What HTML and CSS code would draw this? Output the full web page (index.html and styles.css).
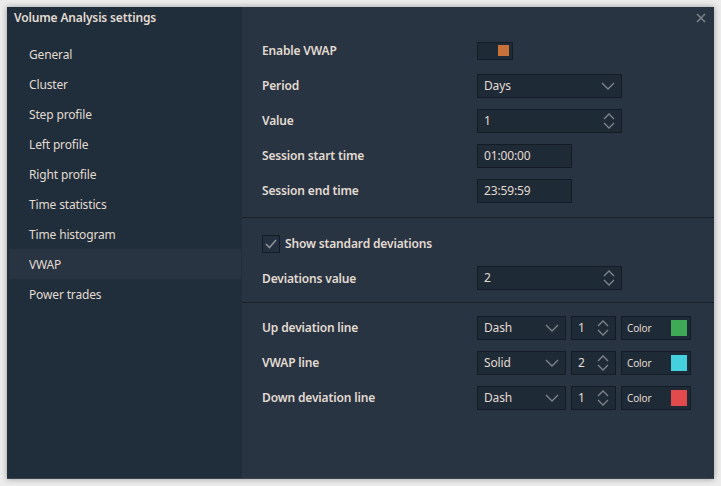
FILE: index.html
```html
<!DOCTYPE html>
<html>
<head>
<meta charset="utf-8">
<link rel="stylesheet" href="styles.css">
</head>
<body>
<div class="dialog">
  <aside class="sidebar">
    <div class="title">Volume Analysis settings</div>
    <div class="nav-item">General</div>
    <div class="nav-item">Cluster</div>
    <div class="nav-item">Step profile</div>
    <div class="nav-item">Left profile</div>
    <div class="nav-item">Right profile</div>
    <div class="nav-item">Time statistics</div>
    <div class="nav-item">Time histogram</div>
    <div class="nav-item active">VWAP</div>
    <div class="nav-item">Power trades</div>
  </aside>
  <main class="content">
    <div class="close">
      <svg width="10" height="10" viewBox="0 0 10 10"><path d="M1 1L9 9M9 1L1 9" stroke="#7d848c" stroke-width="1.5"/></svg>
    </div>
    <section class="section first">
      <div class="row">
        <div class="label">Enable VWAP</div>
        <div class="toggle"><span class="knob"></span></div>
      </div>
      <div class="row">
        <div class="label">Period</div>
        <div class="field select wide"><span>Days</span>
          <svg class="chev" width="14" height="8" viewBox="0 0 14 8"><path d="M1 1L7 7L13 1" fill="none" stroke="#7d848c" stroke-width="1.3"/></svg>
        </div>
      </div>
      <div class="row">
        <div class="label">Value</div>
        <div class="field spin wide"><span>1</span>
          <svg class="arrows" width="12" height="18" viewBox="0 0 12 18"><path d="M1 7L6 2L11 7M1 11L6 16L11 11" fill="none" stroke="#7d848c" stroke-width="1.3"/></svg>
        </div>
      </div>
      <div class="row">
        <div class="label">Session start time</div>
        <div class="field time"><span>01:00:00</span></div>
      </div>
      <div class="row">
        <div class="label">Session end time</div>
        <div class="field time"><span>23:59:59</span></div>
      </div>
    </section>
    <section class="section mid">
      <div class="row">
        <div class="check">
          <svg width="12" height="10" viewBox="0 0 12 10"><path d="M1 5L4.5 8.5L11 1" fill="none" stroke="#8a9097" stroke-width="1.6"/></svg>
        </div>
        <div class="check-label">Show standard deviations</div>
      </div>
      <div class="row">
        <div class="label">Deviations value</div>
        <div class="field spin wide"><span>2</span>
          <svg class="arrows" width="12" height="18" viewBox="0 0 12 18"><path d="M1 7L6 2L11 7M1 11L6 16L11 11" fill="none" stroke="#7d848c" stroke-width="1.3"/></svg>
        </div>
      </div>
    </section>
    <section class="section last">
      <div class="row">
        <div class="label">Up deviation line</div>
        <div class="controls">
          <div class="field select style"><span>Dash</span>
            <svg class="chev" width="14" height="8" viewBox="0 0 14 8"><path d="M1 1L7 7L13 1" fill="none" stroke="#7d848c" stroke-width="1.3"/></svg>
          </div>
          <div class="field spin small"><span>1</span>
            <svg class="arrows" width="12" height="18" viewBox="0 0 12 18"><path d="M1 7L6 2L11 7M1 11L6 16L11 11" fill="none" stroke="#7d848c" stroke-width="1.3"/></svg>
          </div>
          <div class="field color"><span class="color-text">Color</span><span class="swatch green"></span></div>
        </div>
      </div>
      <div class="row">
        <div class="label">VWAP line</div>
        <div class="controls">
          <div class="field select style"><span>Solid</span>
            <svg class="chev" width="14" height="8" viewBox="0 0 14 8"><path d="M1 1L7 7L13 1" fill="none" stroke="#7d848c" stroke-width="1.3"/></svg>
          </div>
          <div class="field spin small"><span>2</span>
            <svg class="arrows" width="12" height="18" viewBox="0 0 12 18"><path d="M1 7L6 2L11 7M1 11L6 16L11 11" fill="none" stroke="#7d848c" stroke-width="1.3"/></svg>
          </div>
          <div class="field color"><span class="color-text">Color</span><span class="swatch cyan"></span></div>
        </div>
      </div>
      <div class="row">
        <div class="label">Down deviation line</div>
        <div class="controls">
          <div class="field select style"><span>Dash</span>
            <svg class="chev" width="14" height="8" viewBox="0 0 14 8"><path d="M1 1L7 7L13 1" fill="none" stroke="#7d848c" stroke-width="1.3"/></svg>
          </div>
          <div class="field spin small"><span>1</span>
            <svg class="arrows" width="12" height="18" viewBox="0 0 12 18"><path d="M1 7L6 2L11 7M1 11L6 16L11 11" fill="none" stroke="#7d848c" stroke-width="1.3"/></svg>
          </div>
          <div class="field color"><span class="color-text">Color</span><span class="swatch red"></span></div>
        </div>
      </div>
    </section>
  </main>
</div>
</body>
</html>
```
FILE: styles.css
```css
* { box-sizing: border-box; }
html, body { margin: 0; padding: 0; }
body {
  background: #ececec;
  width: 721px;
  height: 486px;
  overflow: hidden;
  font-family: "Noto Sans", "Open Sans", sans-serif;
  font-size: 12px;
  letter-spacing: -0.15px;
  color: #e2dbd2;
}
.dialog {
  margin: 7px 0 0 7px;
  width: 707px;
  height: 472px;
  display: flex;
  background: #293442;
  box-shadow: 0 0 6px rgba(0,0,0,0.35);
  border-bottom: 1px solid #3a4553;
}
.sidebar {
  width: 235px;
  background: #202d3a;
  padding-right: 1px;
  flex: none;
}
.title {
  height: 32px;
  padding: 4px 0 0 7px;
  line-height: 14px;
  font-weight: 600;
  font-size: 12px;
}
.nav-item {
  height: 30px;
  line-height: 31px;
  padding-left: 20px;
  margin-left: 2px;
  font-size: 12px;
}
.nav-item.active { background: #293442; }
.content {
  flex: 1;
  position: relative;
}
.close {
  position: absolute;
  top: 6px;
  right: 8px;
  width: 10px;
  height: 10px;
  line-height: 0;
}
.section {
  padding: 8px 0 7px 20px;
  border-bottom: 1px solid #18212b;
}
.section.first { padding-top: 26px; padding-bottom: 9px; }
.section.mid { padding-top: 8px; padding-bottom: 7px; }
.section.mid .row:last-child { height: 34px; padding-bottom: 1px; }
.section.mid .row:last-child { align-items: flex-start; padding-top: 5px; }
.section.last { border-bottom: none; padding-top: 7px; }
.row {
  height: 35px;
  display: flex;
  align-items: center;
}
.label {
  width: 215px;
  flex: none;
  font-weight: 600;
}
.section.mid .row:last-child .label { margin-top: 4px; }
.toggle {
  width: 36px;
  height: 18px;
  background: #1f2a37;
  border: 1px solid #141c25;
  display: flex;
  justify-content: flex-end;
  align-items: center;
  padding-right: 3px;
}
.knob {
  width: 11px;
  height: 11px;
  background: #c8723a;
}
.field {
  height: 24px;
  background: #1f2a37;
  border: 1px solid #131b24;
  display: flex;
  align-items: center;
  padding-left: 6px;
  position: relative;
}
.field span { line-height: 1; }
.wide { width: 145px; }
.time { width: 95px; }
.select, .spin { justify-content: space-between; padding-right: 6px; }
.chev { display: block; }
.arrows { display: block; }
.controls { display: flex; gap: 5px; }
.style { width: 89px; }
.small { width: 45px; }
.color {
  width: 70px;
  justify-content: space-between;
  padding-left: 5px;
  padding-right: 3px;
}
.color-text { font-size: 10px; }
.swatch { width: 16px; height: 16px; display: block; }
.green { background: #3eaa55; }
.cyan { background: #45d0e0; }
.red { background: #e24a4c; }
.check {
  width: 18px;
  height: 18px;
  background: #243040;
  border: 1px solid #131b24;
  display: flex;
  align-items: center;
  justify-content: center;
  flex: none;
}
.check-label {
  margin-left: 5px;
  font-weight: 600;
}
```
